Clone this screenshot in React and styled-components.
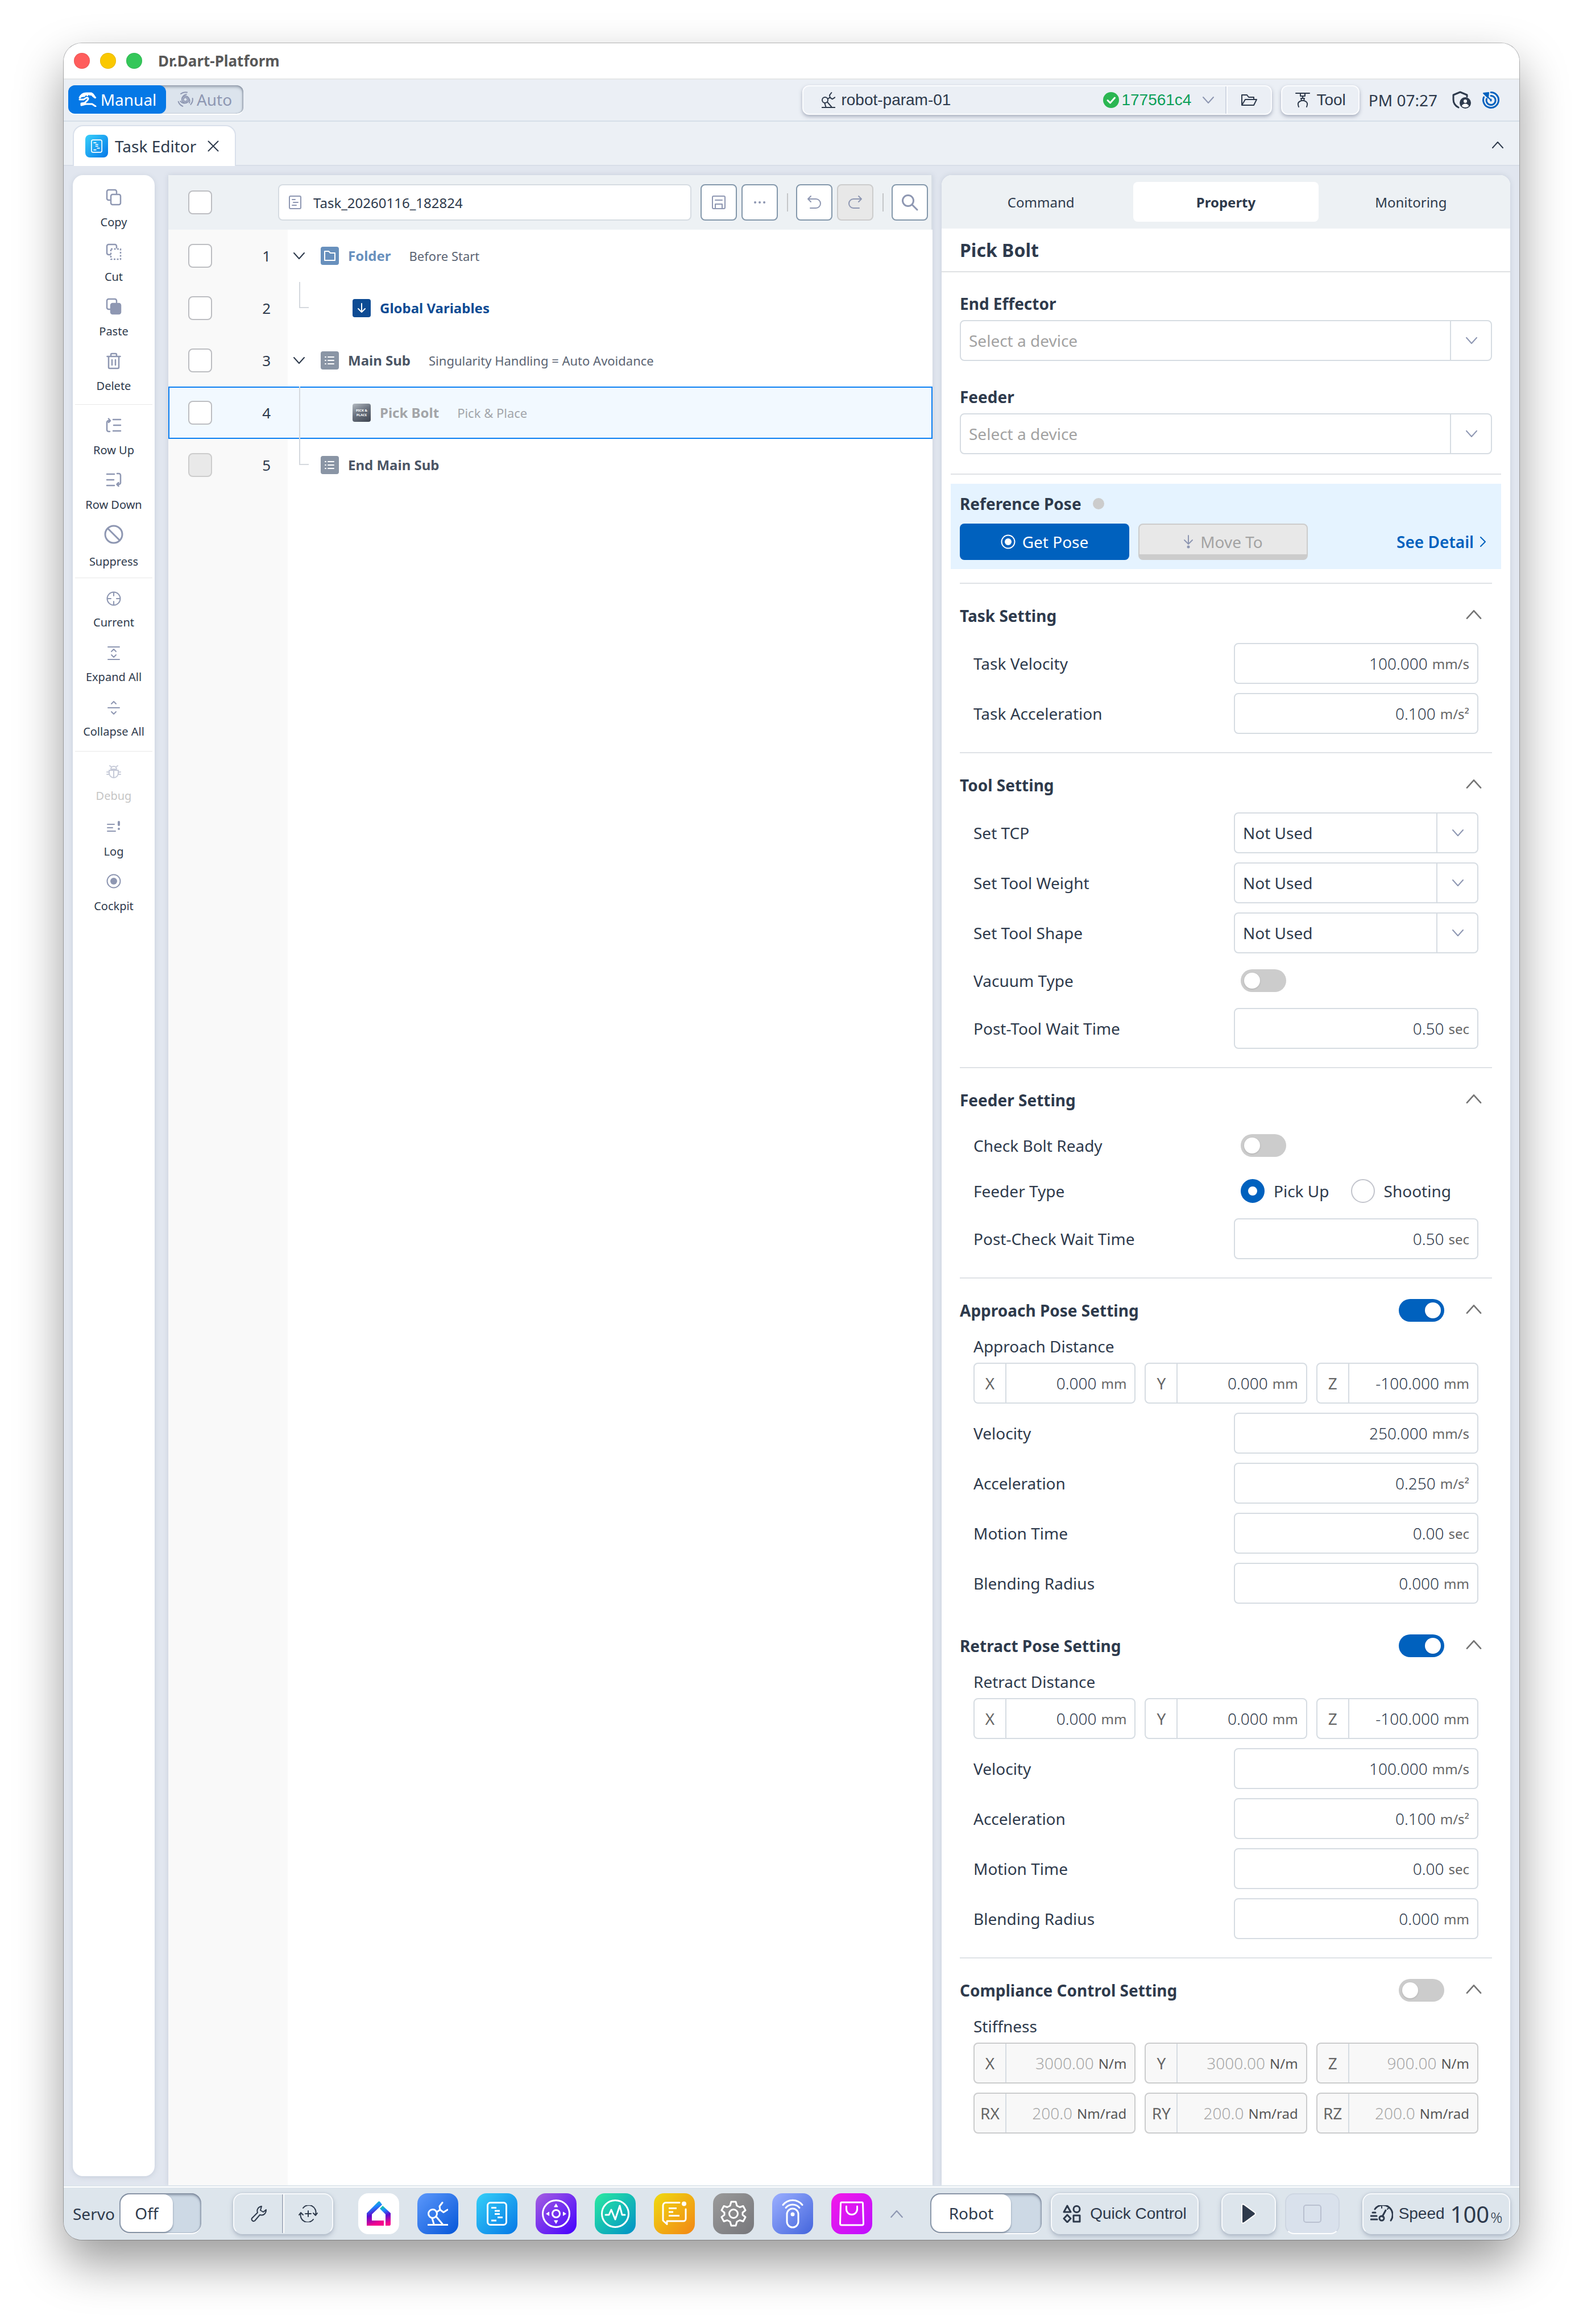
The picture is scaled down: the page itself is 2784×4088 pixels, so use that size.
import React, { useState } from "react";
import styled, { createGlobalStyle, css } from "styled-components";

const c = {
  ink: "#2e3a4c",
  mute: "#8e97b2",
  line: "#d6dce2",
  rule: "#dfe2e6",
  blue: "#0061be",
  disabled: "#cccccc",
};

const Global = createGlobalStyle`
  *, *::before, *::after { box-sizing: border-box; }
  body { margin: 0; background: #fff; color: ${c.ink}; font-family: "Noto Sans", sans-serif; font-size: 28px; }
  button, input, select { font: inherit; color: inherit; margin: 0; }
  button { cursor: pointer; padding: 0; border: 0; background: none; }
  h1, h2, h3, ul, p { margin: 0; padding: 0; list-style: none; font-size: inherit; }
`;

/* ---------- icons ---------- */

const Svg = styled.svg`
  display: block;
  flex: none;
  fill: none;
  stroke: currentColor;
  stroke-width: ${(p) => p.$sw || 2};
  stroke-linecap: round;
  stroke-linejoin: round;
`;

const Icon = ({ w = 28, h = w, box, sw, children }) => (
  <Svg width={w} height={h} viewBox={box || `0 0 ${w} ${h}`} $sw={sw} aria-hidden="true">
    {children}
  </Svg>
);

const Chevron = ({ dir = "down", w = 20, h = 12, sw = 2 }) => (
  <Icon w={w} h={h} box="0 0 20 12" sw={sw}>
    <path d={dir === "down" ? "M1 1L10 11L19 1" : "M1 11L10 1L19 11"} />
  </Icon>
);

const ChevronRight = () => (
  <Icon w={12} h={18}><path d="M2 1L10 9L2 17" /></Icon>
);

const RobotArm = ({ w = 36, h = 42, sw = 3 }) => (
  <Icon w={w} h={h} box="0 0 36 42" sw={sw}>
    <circle cx="9" cy="21" r="7.5" />
    <path d="M8 29L11 39M15 26L26 39M1 40.5H35M16 18L22 14L21 8L26 1.5M22 14L28 18.5L35 14" />
  </Icon>
);

const TaskGlyph = ({ w = 36, h = 42, sw = 3 }) => (
  <Icon w={w} h={h} box="0 0 36 42" sw={sw}>
    <rect x="1.5" y="1.5" width="33" height="39" rx="5" />
    <path strokeLinecap="butt" d="M8 10.5H17M14 16H23M14 21.5H23M19 27.5H28M8 33H17" />
  </Icon>
);

const HandGlyph = () => (
  <Icon w={34} h={26}>
    <path d="M2 10C4 4 9 1 15 1H24L27 3L32 10L30 11L26 8L23 5L21 6L19 4L17 7L14 5L12 8H10C7 8 5 9 4 11Z" fill="currentColor" strokeWidth="1" />
    <path d="M3 13H10L15 10C18 9 19 12 17 14L12 19L6 20V23L14 21H25L31 25" strokeWidth="3" />
  </Icon>
);

const AutoGlyph = () => (
  <Icon w={28} h={28}>
    <circle cx="14" cy="14" r="3.500" />
    {[0, 120, 240].map((turn) => (
      <path key={turn} d="M8 14A6 6 0 0 1 18 9.500A9 9 0 0 1 21 20M6 4A13 13 0 0 1 17 1.500" transform={`rotate(${turn} 14 14)`} />
    ))}
  </Icon>
);

const CheckBadge = () => (
  <Icon w={28} h={28} sw={3}>
    <circle cx="14" cy="14" r="14" fill="#2bb652" stroke="none" />
    <path d="M8 14.5L12.5 19L20.5 10" stroke="#fff" />
  </Icon>
);

const FolderOpen = () => (
  <Icon w={30} h={24}>
    <path d="M2 21V3H11L14 7H23V11M2 21L8 11H28L23 21H2Z" />
  </Icon>
);

const ToolGlyph = () => (
  <Icon w={28} h={28}>
    <path d="M2 2H26M10 2V7H18V2M14 7V11M11 11H17L16 15H12ZM12 15C5 17 5 21 7 26M16 15C23 17 23 21 21 26" />
  </Icon>
);

const ShieldUser = () => (
  <Icon w={34} h={32}>
    <path d="M11 29C5 26 2 22 2 15V7L14 2L26 7V10" strokeWidth="3" />
    <circle cx="23" cy="21" r="9" fill="currentColor" />
    <circle cx="23" cy="18" r="3" fill="#fff" stroke="none" />
    <path d="M17 27C17 21 29 21 29 27Q23 31 17 27Z" fill="#fff" stroke="none" />
  </Icon>
);

const TargetGlyph = () => (
  <Icon w={32} h={32} sw={3}>
    <path d="M16 2.500A13.500 13.500 0 1 1 3.500 11M16 8.500A8 8 0 1 1 8.500 14M16 15V17" />
    <path d="M3 4L12 3L11 12ZM10 10L16 16" fill="currentColor" strokeWidth="2" />
  </Icon>
);

const Copy = ({ variant }) => (
  <Icon w={28} h={30}>
    <path d="M8 20H5A3 3 0 0 1 2 17V5A3 3 0 0 1 5 2H16A3 3 0 0 1 19 5V8" strokeWidth="2.5" />
    <rect
      x="9" y="10" width="17" height="18" rx={variant === "dash" ? 0 : 3} strokeWidth="2.5"
      strokeDasharray={variant === "dash" ? "3 2.500" : undefined}
      strokeLinecap="butt"
      fill={variant === "fill" ? "currentColor" : "none"}
    />
  </Icon>
);

const SideIcons = {
  copy: <Copy />,
  cut: <Copy variant="dash" />,
  paste: <Copy variant="fill" />,
  trash: (
    <Icon w={26} h={30} sw={2.5}>
      <path d="M1.500 7H24.500M8 7V4A2 2 0 0 1 10 2H16A2 2 0 0 1 18 4V7M4 7V26A2 2 0 0 0 6 28H20A2 2 0 0 0 22 26V7M10 13V22M16 13V22" />
    </Icon>
  ),
  rowUp: (
    <Icon w={28} h={26} sw={2.5}>
      <path d="M7 24H5A3 3 0 0 1 2 21V8A3 3 0 0 1 5 5H7M5 1.500L8 5L5 8M13 3H26M14 13H26M13 23H26" />
    </Icon>
  ),
  rowDown: (
    <Icon w={28} h={26} sw={2.5}>
      <path d="M2 3H15M2 13H14M2 23H15M20 2H23A3 3 0 0 1 26 5V18A3 3 0 0 1 23 21H20M22.500 18L19.500 21L22.500 24" />
    </Icon>
  ),
  suppress: (
    <Icon w={34} h={34} sw={3}><circle cx="17" cy="17" r="15" /><path d="M6.500 6.500L27.500 27.500" /></Icon>
  ),
  current: (
    <Icon w={26} h={26}><circle cx="13" cy="13" r="11.500" /><path d="M13 2V8M13 18V24M2 13H8M18 13H24" /></Icon>
  ),
  expand: (
    <Icon w={24} h={26}><path d="M2 2H22M2 24H22M8 10L12 6L16 10M8 16L12 20L16 16" /></Icon>
  ),
  collapse: (
    <Icon w={24} h={26}><path d="M2 13H22M8 6L12 2L16 6M8 20L12 24L16 20" /></Icon>
  ),
  debug: (
    <Icon w={26} h={26}>
      <path d="M8 8A5 5 0 0 1 18 8ZM6 2L9 4M20 2L17 4M5 10H21V15A8 8 0 0 1 5 15ZM13 10V23M1 13H5M1 17H5M21 13H25M21 17H25" />
    </Icon>
  ),
  log: (
    <Icon w={24} h={24}>
      <path d="M1 8H13M1 14H10M1 20H15" />
      <path d="M21 4V9" strokeWidth="4" /><circle cx="21" cy="16" r="2" fill="currentColor" stroke="none" />
    </Icon>
  ),
  cockpit: (
    <Icon w={26} h={26}><circle cx="13" cy="13" r="11.500" /><circle cx="13" cy="13" r="6" fill="currentColor" stroke="none" /></Icon>
  ),
};

/* ---------- window frame ---------- */

const Page = styled.div`
  display: flex;
  min-height: 100vh;
  padding: 76px 112px 148px;
`;

const Window = styled.main`
  display: flex;
  flex-direction: column;
  flex: 1;
  min-width: 0;
  overflow: hidden;
  border-radius: 32px;
  background: #e1e6ef;
  box-shadow: 0 0 0 1px rgba(0, 0, 0, 0.26), 0 40px 84px rgba(0, 0, 0, 0.4);
`;

const TitleBar = styled.header`
  display: flex;
  align-items: center;
  gap: 18px;
  height: 64px;
  padding-left: 18px;
  background: #fff;
  border-bottom: 2px solid #e5e6e7;
`;

const Light = styled.button`
  width: 28px;
  height: 28px;
  border-radius: 50%;
  background: ${(p) => p.$color};
  box-shadow: inset 0 0 0 1px rgba(0, 0, 0, 0.08);
`;

const AppName = styled.h1`
  margin-left: 10px;
  color: #585858;
  font-size: 26px;
  line-height: 36px;
  font-weight: 700;
`;

const HeaderBar = styled.div`
  display: flex;
  align-items: center;
  gap: 16px;
  height: 74px;
  padding: 0 34px 0 8px;
  background: #ebeff5;
  border-bottom: 2px solid #d5dee8;
`;

const ModeSwitch = styled.div`
  display: flex;
  height: 52px;
  width: 308px;
  border-radius: 12px;
  background: #dce4ed;
  border-bottom: 2px solid #fff;
  box-shadow: inset 0 3px 5px rgba(90, 100, 120, 0.55), inset -2px 0 2px rgba(90, 100, 120, 0.3);
`;

const ModeButton = styled.button`
  display: flex;
  align-items: center;
  justify-content: center;
  gap: 6px;
  height: 50px;
  width: ${(p) => (p.$on ? 172 : 136)}px;
  border-radius: 12px;
  color: ${(p) => (p.$on ? "#fff" : c.mute)};
  background: ${(p) => (p.$on ? "#0578e6" : "transparent")};
`;

const raised = css`
  border: 2px solid #fbfcfe;
  box-shadow: 0 3px 6px rgba(100, 110, 135, 0.5);
  background: #ebeff5;
`;

const ParamBar = styled.div`
  ${raised}
  display: flex;
  align-items: center;
  width: 826px;
  height: 52px;
  margin-left: auto;
  border-radius: 12px;
  font-family: "Liberation Sans", Arial, sans-serif;
`;

const ParamName = styled.button`
  display: flex;
  align-items: center;
  gap: 10px;
  flex: 1;
  padding-left: 32px;
`;

const Version = styled.button`
  display: flex;
  align-items: center;
  gap: 4px;
  padding-right: 22px;
  color: #0c9f58;

  svg:last-child { margin-left: 16px; color: ${c.mute}; }
`;

const OpenButton = styled.button`
  display: grid;
  place-items: center;
  width: 78px;
  height: 48px;
  border-left: 2px solid #fbfcfe;
  box-shadow: -2px 0 0 #cfd6e2;
`;

const ToolButton = styled.button`
  ${raised}
  display: flex;
  align-items: center;
  gap: 10px;
  height: 52px;
  padding: 0 22px;
  border-radius: 12px;
  font-family: "Liberation Sans", Arial, sans-serif;
`;

const StatusIcons = styled.div`
  display: flex;
  align-items: center;
  gap: 18px;
  margin-left: 10px;
`;

const IconButton = styled.button`
  display: grid;
  place-items: center;
  color: ${(p) => p.$color || c.ink};
`;

const TabBar = styled.nav`
  display: flex;
  align-items: flex-end;
  justify-content: space-between;
  height: 78px;
  padding: 0 28px 0 16px;
  background: #ecf0f5;
  box-shadow: inset 0 -2px 0 #d8dee8;
`;

const EditorTab = styled.div`
  display: flex;
  align-items: center;
  gap: 12px;
  height: 72px;
  padding: 0 28px 0 20px;
  background: #fff;
  border: 2px solid #d9e0eb;
  border-bottom: 0;
  border-radius: 18px 18px 0 0;
`;

const TabIcon = styled.span`
  display: grid;
  place-items: center;
  width: 40px;
  height: 40px;
  border-radius: 8px;
  color: #fff;
  background: linear-gradient(135deg, #38d0fa, #0577e8);
`;

const CloseButton = styled(IconButton)`
  margin-left: 8px;
`;

const CollapseButton = styled(IconButton)`
  height: 74px;
`;

/* ---------- body ---------- */

const Body = styled.div`
  display: flex;
  flex: 1;
  padding: 16px 16px 0;
`;

const SideBar = styled.nav`
  width: 144px;
  margin: 0 24px 16px 0;
  padding: 21px 4px;
  background: #fff;
  border-radius: 18px;
  box-shadow: 0 2px 8px rgba(120, 135, 160, 0.25);
`;

const SideGroup = styled.div`
  display: flex;
  flex-direction: column;
  gap: 20px;

  & + & { margin-top: 18px; padding-top: 18px; border-top: 1px solid #e8e8e8; }
`;

const SideButton = styled.button`
  display: flex;
  flex-direction: column;
  align-items: center;
  gap: ${(p) => p.$gap || 12}px;
  height: 76px;
  opacity: ${(p) => (p.disabled ? 0.5 : 1)};
`;

const SideIcon = styled.span`
  display: grid;
  place-items: center;
  flex: none;
  height: 36px;
  color: ${c.mute};
`;

const SideLabel = styled.span`
  font-size: 20px;
  line-height: 28px;
  white-space: nowrap;
  color: ${(p) => (p.$off ? "#8c8c8c" : c.ink)};
`;

const Editor = styled.section`
  display: flex;
  flex-direction: column;
  flex: 1;
  min-width: 0;
  background: linear-gradient(to right, #f9f9f9 210px, #fff 210px);
  box-shadow: 0 0 8px rgba(120, 135, 160, 0.25);
`;

const EditorHead = styled.div`
  display: flex;
  align-items: center;
  height: 96px;
  padding: 0 6px 0 35px;
  background: #edf1f4;
  border-right: 2px solid #d8dee6;
`;

const Check = styled.input.attrs({ type: "checkbox" })`
  appearance: none;
  flex: none;
  width: 42px;
  height: 42px;
  border: 2px solid #bdbec2;
  border-radius: 8px;
  background: #fff;

  &:disabled { background: #e9e9e9; border-color: #ccc; }
`;

const TaskName = styled.label`
  display: flex;
  align-items: center;
  gap: 20px;
  flex: 1;
  height: 64px;
  margin: 0 16px 0 116px;
  padding-left: 16px;
  border: 2px solid ${c.line};
  border-radius: 8px;
  background: #fff;
  color: ${c.mute};

  input {
    flex: 1;
    min-width: 0;
    border: 0;
    outline: 0;
    padding: 0;
    background: none;
    color: ${c.ink};
    font-size: 24px;
  }
`;

const HeadTools = styled.div`
  display: flex;
  gap: 8px;

  & + & { margin-left: 16px; padding-left: 16px; position: relative; }
  & + &::before {
    content: "";
    position: absolute;
    left: 0;
    top: 16px;
    height: 32px;
    border-left: 2px solid #c4c6c8;
  }
`;

const SquareButton = styled.button`
  display: grid;
  place-items: center;
  width: 64px;
  height: 64px;
  border: 2px solid #8498ab;
  border-radius: 8px;
  background: #fff;
  color: ${c.mute};

  &:disabled { background: #e8e8e8; border-color: #ccc; }
`;

const TaskRow = styled.li`
  display: flex;
  height: 92px;
  ${(p) => p.$selected && css`background: #f2f9ff; box-shadow: inset 0 0 0 2px #0b7ff2;`}
`;

const RowGutter = styled.div`
  display: flex;
  align-items: center;
  justify-content: space-between;
  width: 210px;
  padding: 0 30px 0 35px;
  font-size: 26px;
`;

const TreeSlot = styled.div`
  width: ${(p) => (p.$deep ? 114 : 58)}px;
  padding-left: ${(p) => (p.$fold ? 10 : 20)}px;
  display: flex;
  align-items: ${(p) => (p.$fold ? "center" : "flex-start")};
`;

const Guide = styled.span`
  width: 17px;
  height: ${(p) => (p.$through ? 92 : 46)}px;
  border-left: 2px solid #d5d9de;
  border-bottom: ${(p) => (p.$through ? 0 : 2)}px solid #d5d9de;
`;

const RowBody = styled.div`
  display: flex;
  align-items: center;
  gap: 16px;
`;

const RowIcon = styled.span`
  display: grid;
  place-items: center;
  width: 32px;
  height: 32px;
  border-radius: 4px;
  color: #fff;
  background: ${(p) => p.$bg};
  font-size: 6px;
  line-height: 8px;
  font-weight: 700;
  text-align: center;
`;

const RowName = styled.strong`
  font-size: 24px;
  line-height: 32px;
  color: ${(p) => p.$color};
`;

const RowMeta = styled.span`
  margin-left: 16px;
  font-size: 22px;
  line-height: 30px;
  color: ${(p) => (p.$dim ? "#a3a6ab" : "#5b6473")};
`;

/* ---------- property panel ---------- */

const Panel = styled.aside`
  width: 1000px;
  margin-left: 16px;
  background: #fff;
  border-radius: 18px 18px 0 0;
  box-shadow: 0 0 8px rgba(120, 135, 160, 0.25);
  overflow: hidden;
`;

const PanelTabs = styled.div`
  display: grid;
  grid-template-columns: repeat(3, 1fr);
  height: 94px;
  padding: 12px;
  background: #edf1f4;
`;

const PanelTab = styled.button`
  height: 70px;
  border-radius: 8px;
  font-size: 24px;
  font-weight: ${(p) => (p.$on ? 700 : 400)};
  background: ${(p) => (p.$on ? "#fff" : "none")};
`;

const PanelTitle = styled.h2`
  height: 77px;
  padding: 0 32px;
  border-bottom: 2px solid #dfe1e3;
  font-size: 32px;
  line-height: 76px;
  font-weight: 700;
`;

const PanelBody = styled.div`
  padding: 36px 32px 58px;
`;

const Field = styled.div`
  & + & { margin-top: 44px; }
`;

const FieldLabel = styled.label`
  display: block;
  margin-bottom: 10px;
  line-height: 38px;
  font-weight: 700;
`;

const SelectShell = styled.div`
  display: grid;
  width: ${(p) => (p.$narrow ? "430px" : "100%")};
`;

const NativeSelect = styled.select`
  grid-area: 1 / 1;
  appearance: none;
  width: 100%;
  height: 72px;
  padding: 0 90px 0 14px;
  border: 2px solid ${c.line};
  border-radius: 8px;
  background: #fff;
  color: ${(p) => (p.$placeholder ? "#a2a2a2" : c.ink)};
`;

const SelectArrow = styled.span`
  grid-area: 1 / 1;
  justify-self: end;
  display: grid;
  place-items: center;
  width: 74px;
  border-left: 2px solid ${c.line};
  pointer-events: none;
  color: ${c.mute};
`;

const PoseCard = styled.section`
  margin: 34px -16px 24px;
  border-top: 2px solid ${c.rule};
  padding-top: 16px;
`;

const PoseInner = styled.div`
  padding: 16px;
  background: #e5f3ff;
`;

const PoseTitle = styled.h3`
  display: flex;
  align-items: center;
  gap: 20px;
  margin-bottom: 16px;
  line-height: 38px;
  font-weight: 700;
`;

const Dot = styled.span`
  width: 20px;
  height: 20px;
  border-radius: 50%;
  background: #ccc;
`;

const PoseActions = styled.div`
  display: flex;
  align-items: center;
  gap: 16px;
`;

const PoseButton = styled.button`
  display: flex;
  align-items: center;
  justify-content: center;
  gap: 12px;
  width: 298px;
  height: 64px;
  border-radius: 8px;
  color: #fff;
  background: ${c.blue};

  &:disabled {
    padding-top: 8px;
    color: #a3a3a3;
    background: #e8e8e8;
    border: 2px solid #ccc;
    border-bottom-width: 10px;
  }
  &:disabled svg { color: ${c.mute}; }
`;

const DetailLink = styled.a`
  display: flex;
  align-items: center;
  gap: 10px;
  margin-left: auto;
  padding-right: 10px;
  color: ${c.blue};
  font-weight: 600;
  text-decoration: none;
`;

const SectionBox = styled.section`
  border-top: ${(p) => (p.$plain ? 0 : 2)}px solid ${c.rule};
  padding: ${(p) => (p.$plain ? 18 : 32)}px 0 32px;
`;

const SectionHead = styled.div`
  display: flex;
  align-items: center;
  height: 48px;
  margin-bottom: 24px;
  padding-right: 18px;

  h3 { flex: 1; font-weight: 700; line-height: 38px; }
`;

const SectionToggle = styled.button`
  margin-left: 38px;
  padding-bottom: 4px;
  color: #757575;
`;

const Rows = styled.div`
  display: flex;
  flex-direction: column;
  gap: 16px;
  padding: 0 24px;
`;

const Row = styled.div`
  display: flex;
  align-items: center;
  justify-content: space-between;
  min-height: 64px;
`;

const ControlCell = styled.div`
  display: flex;
  align-items: center;
  width: 430px;
  padding-left: 12px;
`;

const Switch = styled.input.attrs({ type: "checkbox", role: "switch" })`
  appearance: none;
  display: flex;
  align-items: center;
  flex: none;
  width: 80px;
  height: 40px;
  padding: 0 6px;
  border-radius: 20px;
  background: ${c.disabled};

  &::before {
    content: "";
    width: 28px;
    height: 28px;
    border-radius: 50%;
    background: #fff;
    box-shadow: 0 1px 3px rgba(0, 0, 0, 0.15);
  }
  &:checked { background: ${c.blue}; justify-content: flex-end; }
`;

const RadioLabel = styled.label`
  display: flex;
  align-items: center;
  gap: 16px;

  & + & { margin-left: 38px; }
`;

const Radio = styled.input.attrs({ type: "radio" })`
  appearance: none;
  flex: none;
  width: 42px;
  height: 42px;
  border: 2px solid #c2c4cc;
  border-radius: 50%;
  background: #fff;

  &:checked { border: 13px solid ${c.blue}; }
`;

const NumberBox = styled.div`
  display: flex;
  align-items: center;
  flex: ${(p) => (p.$axis ? "1" : "none")};
  min-width: 0;
  width: ${(p) => (p.$axis ? "auto" : "430px")};
  height: 72px;
  padding-right: 14px;
  border: 2px solid ${(p) => (p.$off ? "#cbcccd" : c.line)};
  border-radius: 8px;
  background: ${(p) => (p.$off ? "#f8f8f8" : "#fff")};

  input {
    flex: 1;
    min-width: 0;
    width: 0;
    border: 0;
    outline: 0;
    padding: 0;
    background: none;
    text-align: right;
    font-weight: 300;
    color: ${(p) => (p.$off ? "#a8a8a8" : c.ink)};
  }
`;

const AxisName = styled.label`
  display: grid;
  place-items: center;
  width: 56px;
  height: 68px;
  border-right: 2px solid ${c.line};
  font-size: 28px;
  color: #666;
`;

const Unit = styled.span`
  margin-left: 8px;
  font-size: 24px;
  color: ${(p) => (p.$off ? "#565656" : "#666")};
`;

const AxisGroup = styled.fieldset`
  display: flex;
  flex-wrap: wrap;
  gap: 16px;
  min-width: 0;
  margin: 0;
  padding: 0;
  border: 0;

  legend { padding: 0; margin-bottom: 14px; line-height: 30px; }
`;

const AxisRow = styled.div`
  display: flex;
  flex: 1 0 100%;
  gap: 16px;
`;

/* ---------- dock ---------- */

const Dock = styled.footer`
  display: flex;
  align-items: center;
  height: 96px;
  padding: 4px 16px 0;
  background: #dde5ec;
  box-shadow: inset 0 2px 0 #dde5ec, inset 0 4px 0 #fff;
`;

const ServoLabel = styled.span`
  margin-right: 8px;
`;

const DockSwitch = styled.button`
  display: flex;
  width: ${(p) => p.$w}px;
  height: 72px;
  padding: 2px;
  border-radius: 18px;
  background: #cdd9e5;
  border-bottom: 2px solid #fff;
  box-shadow: inset 0 3px 4px rgba(80, 92, 115, 0.6), inset -2px 0 2px rgba(80, 92, 115, 0.3), inset 2px 0 2px rgba(80, 92, 115, 0.3);

  span {
    display: grid;
    place-items: center;
    width: ${(p) => p.$knob}px;
    height: 66px;
    border-radius: 16px;
    background: #fff;
    box-shadow: 0 2px 3px rgba(70, 85, 110, 0.6);
  }
`;

const raisedDock = css`
  border: 2px solid #f8fafc;
  border-bottom-color: #dde5ec;
  box-shadow: 0 4px 8px rgba(100, 115, 140, 0.35), 0 0 4px rgba(100, 115, 140, 0.2);
  background: #dde5ec;
`;

const DockPair = styled.div`
  ${raisedDock}
  display: grid;
  grid-template-columns: 1fr 1fr;
  width: 176px;
  height: 72px;
  margin-left: 56px;
  border-radius: 16px;

  button + button { border-left: 2px solid #fff; box-shadow: -2px 0 0 #aab3c2; }
`;

const Apps = styled.div`
  display: flex;
  gap: 32px;
  margin-left: 44px;
`;

const AppButton = styled.button`
  display: grid;
  place-items: center;
  width: 72px;
  height: 72px;
  border-radius: 18px;
  color: #fff;
  background: ${(p) => p.$bg};
`;

const MoreApps = styled(IconButton)`
  margin: 0 auto 0 32px;
`;

const DockRight = styled.div`
  display: flex;
  align-items: center;
  gap: 16px;
  font-family: "Liberation Sans", Arial, sans-serif;

  ${DockSwitch} { font-family: "Noto Sans", sans-serif; }
`;

const DockButton = styled.button`
  ${raisedDock}
  display: flex;
  align-items: center;
  justify-content: center;
  gap: ${(p) => p.$gap || 16}px;
  width: ${(p) => p.$w || 96}px;
  height: 72px;
  border-radius: 16px;
  margin-right: ${(p) => p.$after || 0}px;

  &:disabled {
    background: #d9e1ec;
    border-color: #ced6e2;
    border-bottom-color: #fff;
    box-shadow: none;
    color: #b9c0d0;
  }
`;

const Speed = styled.span`
  display: flex;
  align-items: baseline;
  gap: 2px;
  font-family: "Noto Sans", sans-serif;
  font-size: 40px;

  small { font-size: 26px; font-weight: 300; }
`;

/* ---------- composed parts ---------- */

const slug = (s) => s.toLowerCase().replace(/[^a-z0-9]+/g, "-");

function Select({ id, value, narrow, placeholder }) {
  return (
    <SelectShell $narrow={narrow}>
      <NativeSelect id={id} defaultValue={value} $placeholder={placeholder}>
        <option>{value}</option>
      </NativeSelect>
      <SelectArrow><Chevron w={20} h={12} /></SelectArrow>
    </SelectShell>
  );
}

function NumberRow({ group, label, value, unit }) {
  const id = slug(`${group} ${label}`);
  return (
    <Row>
      <label htmlFor={id}>{label}</label>
      <NumberBox>
        <input id={id} defaultValue={value} inputMode="decimal" />
        <Unit>{unit}</Unit>
      </NumberBox>
    </Row>
  );
}

function SelectRow({ label }) {
  const id = slug(label);
  return (
    <Row>
      <label htmlFor={id}>{label}</label>
      <Select id={id} value="Not Used" narrow />
    </Row>
  );
}

function SwitchRow({ label }) {
  const id = slug(label);
  return (
    <Row>
      <label htmlFor={id}>{label}</label>
      <ControlCell><Switch id={id} /></ControlCell>
    </Row>
  );
}

function Axes({ legend, rows, off }) {
  return (
    <AxisGroup disabled={off}>
      <legend>{legend}</legend>
      {rows.map((row, i) => (
        <AxisRow key={i}>
          {row.map(([axis, value, unit]) => {
            const id = slug(`${legend} ${axis}`);
            return (
              <NumberBox key={axis} $axis $off={off}>
                <AxisName htmlFor={id}>{axis}</AxisName>
                <input id={id} defaultValue={value} />
                <Unit $off={off}>{unit}</Unit>
              </NumberBox>
            );
          })}
        </AxisRow>
      ))}
    </AxisGroup>
  );
}

function Section({ title, plain, toggle, children }) {
  const [open, setOpen] = useState(true);
  return (
    <SectionBox $plain={plain}>
      <SectionHead>
        <h3>{title}</h3>
        {toggle !== undefined && <Switch defaultChecked={toggle} aria-label={title} />}
        <SectionToggle aria-label={`Fold ${title}`} onClick={() => setOpen(!open)}>
          <Chevron dir={open ? "up" : "down"} w={28} h={16} sw={2} />
        </SectionToggle>
      </SectionHead>
      {open && <Rows>{children}</Rows>}
    </SectionBox>
  );
}

const sideGroups = [
  [["copy", "Copy"], ["cut", "Cut"], ["paste", "Paste"], ["trash", "Delete"]],
  [["rowUp", "Row Up"], ["rowDown", "Row Down"], ["suppress", "Suppress", 16]],
  [["current", "Current", 10], ["expand", "Expand All", 10], ["collapse", "Collapse All", 10]],
  [["debug", "Debug", 10, true], ["log", "Log"], ["cockpit", "Cockpit"]],
];

const listGlyph = (
  <Icon w={20} h={20}>
    <path d="M2 4H3M2 10H3M2 16H3M7 4H17M7 10H17M7 16H17" />
  </Icon>
);

const tasks = [
  { name: "Folder", meta: "Before Start", color: "#6890bd", bg: "#6890bd", fold: true,
    icon: <Icon w={20} h={20}><path d="M1 2H8L11 5H19V18H1Z" /></Icon> },
  { name: "Global Variables", color: "#0d4b94", bg: "#0d4b94", deep: true,
    icon: <Icon w={20} h={20}><path d="M10 2V17M4 11L10 17L16 11" /></Icon> },
  { name: "Main Sub", meta: "Singularity Handling = Auto Avoidance", color: "#4b5565", bg: "#8a95a5", fold: true, icon: listGlyph },
  { name: "Pick Bolt", meta: "Pick & Place", color: "#a3a5a8", deep: true, through: true, selected: true, dim: true,
    bg: "linear-gradient(150deg, #b5bcc2, #6c7480 45%, #3d4450)", icon: <span>PICK &amp;<br />PLACE</span> },
  { name: "End Main Sub", color: "#4b5565", bg: "#8a95a5", icon: listGlyph, locked: true },
];

const g = (a, b) => `linear-gradient(135deg, ${a}, ${b})`;

const apps = [
  ["Home", "#fff", (
    <Icon w={44} h={44}>
      <defs>
        <linearGradient id="homeFill" x1="0" y1="0" x2="0.25" y2="1">
          <stop offset="0" stopColor="#1be07f" /><stop offset="0.3" stopColor="#1a8cff" />
          <stop offset="0.6" stopColor="#5a0ad0" /><stop offset="1" stopColor="#f5008c" />
        </linearGradient>
      </defs>
      <path d="M1 43V21L21 1C22 0 24 0 25 2L28 6L10 23V34H31V43Z" fill="url(#homeFill)" stroke="none" />
      <path d="M29 8L43 21V40Q43 43 41 43H34V23L24 13Z" fill="url(#homeFill)" stroke="none" />
    </Icon>
  )],
  ["Robot", g("#5c98fb", "#0556d8"), <RobotArm />],
  ["Task Editor", g("#35d0f8", "#0577e6"), <TaskGlyph />],
  ["Jog", g("#a55fe0", "#4400ff"), (
    <Icon w={52} h={52} sw={3}>
      <circle cx="26" cy="26" r="23.500" /><circle cx="26" cy="26" r="6.500" />
      <path d="M26 9L29 14H23ZM26 43L29 38H23ZM9 26L13.500 23V29ZM43 26L38.500 23V29Z" fill="currentColor" strokeWidth="1" />
    </Icon>
  )],
  ["Monitor", g("#2beaa0", "#0090c8"), (
    <Icon w={52} h={52} sw={3}>
      <circle cx="26" cy="26" r="23.500" />
      <path d="M9 28H15L19 19L26 36L34 12L38 28H43" />
    </Icon>
  )],
  ["Log", g("#efda10", "#f28616"), (
    <Icon w={44} h={44} sw={3}>
      <path d="M31 2.500H7A5 5 0 0 0 2 7.500V34L9 40.500V35H38A4 4 0 0 0 42 31V14" />
      <circle cx="39" cy="4.500" r="4" fill="currentColor" stroke="none" />
      <path d="M12 12.500H26M12 19H20M12 25.500H31" strokeLinecap="butt" />
    </Icon>
  )],
  ["Settings", g("#9a9a9a", "#77777b"), (
    <Icon w={46} h={46} sw={3}>
      <circle cx="23" cy="23" r="7.500" />
      <path d="M19 2H27L29 9L34 11.500L40 9.500L44 17L39 21V25L44 29L40 36.500L34 34.500L29 37L27 44H19L17 37L12 34.500L6 36.500L2 29L7 25V21L2 17L6 9.500L12 11.500L17 9Z" />
    </Icon>
  )],
  ["Remote", g("#9bafff", "#4465dc"), (
    <Icon w={40} h={52} sw={3}>
      <rect x="10" y="17" width="20" height="33" rx="10" /><circle cx="20" cy="27" r="3.500" fill="currentColor" stroke="none" />
      <path d="M3 10.500C12 -0.500 28 -0.500 37 10.500M8 15.500C14 8 26 8 32 15.500" />
    </Icon>
  )],
  ["Store", g("#f31ae8", "#bd10ff"), (
    <Icon w={44} h={44} sw={3}>
      <path d="M4 2H40Q41.500 2 41.500 4L42.500 39Q42.500 42 40 42H4Q1.500 42 1.500 39L2.500 4Q2.500 2 4 2ZM12.500 9V14A9.500 9.500 0 0 0 31.500 14V9" />
    </Icon>
  )],
];

export default function App() {
  return (
    <Page>
      <Global />
      <Window>
        <TitleBar>
          <Light $color="#ff5d5c" aria-label="Close" />
          <Light $color="#fac800" aria-label="Minimise" />
          <Light $color="#34c759" aria-label="Zoom" />
          <AppName>Dr.Dart-Platform</AppName>
        </TitleBar>

        <HeaderBar>
          <ModeSwitch>
            <ModeButton $on aria-pressed="true"><HandGlyph />Manual</ModeButton>
            <ModeButton aria-pressed="false"><AutoGlyph />Auto</ModeButton>
          </ModeSwitch>
          <ParamBar>
            <ParamName><RobotArm w={24} h={30} />robot-param-01</ParamName>
            <Version><CheckBadge />177561c4<Chevron /></Version>
            <OpenButton aria-label="Open"><FolderOpen /></OpenButton>
          </ParamBar>
          <ToolButton><ToolGlyph />Tool</ToolButton>
          <span>PM 07:27</span>
          <StatusIcons>
            <IconButton aria-label="Safety"><ShieldUser /></IconButton>
            <IconButton aria-label="Recovery" $color={c.blue}><TargetGlyph /></IconButton>
          </StatusIcons>
        </HeaderBar>

        <TabBar>
          <EditorTab>
            <TabIcon><TaskGlyph w={20} h={24} sw={3} /></TabIcon>
            Task Editor
            <CloseButton aria-label="Close tab">
              <Icon w={20} h={20}><path d="M1.500 1.500L18.500 18.500M18.500 1.500L1.500 18.500" /></Icon>
            </CloseButton>
          </EditorTab>
          <CollapseButton aria-label="Collapse header"><Chevron dir="up" /></CollapseButton>
        </TabBar>

        <Body>
          <SideBar>
            {sideGroups.map((group, i) => (
              <SideGroup key={i}>
                {group.map(([icon, label, gap, off]) => (
                  <SideButton key={label} $gap={gap} disabled={off}>
                    <SideIcon>{SideIcons[icon]}</SideIcon>
                    <SideLabel $off={off}>{label}</SideLabel>
                  </SideButton>
                ))}
              </SideGroup>
            ))}
          </SideBar>

          <Editor>
            <EditorHead>
              <Check aria-label="Select all" />
              <TaskName>
                <Icon w={24} h={26}>
                  <rect x="2" y="2" width="20" height="22" rx="2" />
                  <path d="M7 8H12M9 13H17M7 18H14" />
                </Icon>
                <input aria-label="Task name" defaultValue="Task_20260116_182824" />
              </TaskName>
              <HeadTools>
                <SquareButton aria-label="Save">
                  <Icon w={26} h={26}><rect x="2" y="2" width="22" height="22" rx="2" /><path d="M7 9H19M7 24V16H19V24" /></Icon>
                </SquareButton>
                <SquareButton aria-label="More">
                  <Icon w={22} h={6}><path d="M3 3H3.100M11 3H11.100M19 3H19.100" strokeWidth="4" /></Icon>
                </SquareButton>
              </HeadTools>
              <HeadTools>
                <SquareButton aria-label="Undo">
                  <Icon w={26} h={26}><path d="M7 2L2 7L7 12M2 7H16A8 8 0 0 1 16 23H6" /></Icon>
                </SquareButton>
                <SquareButton aria-label="Redo" disabled>
                  <Icon w={26} h={26}><path d="M19 2L24 7L19 12M24 7H10A8 8 0 0 0 10 23H20" /></Icon>
                </SquareButton>
              </HeadTools>
              <HeadTools>
                <SquareButton aria-label="Search">
                  <Icon w={30} h={30} sw={3}><circle cx="12" cy="12" r="9.500" /><path d="M19 19L28 28" /></Icon>
                </SquareButton>
              </HeadTools>
            </EditorHead>
            <ul>
              {tasks.map((t, i) => (
                <TaskRow key={t.name} $selected={t.selected}>
                  <RowGutter>
                    <Check aria-label={`Select ${t.name}`} disabled={t.locked} />
                    {i + 1}
                  </RowGutter>
                  <TreeSlot $deep={t.deep} $fold={t.fold}>
                    {t.fold ? <Chevron w={20} h={12} /> : <Guide $through={t.through} />}
                  </TreeSlot>
                  <RowBody>
                    <RowIcon $bg={t.bg}>{t.icon}</RowIcon>
                    <RowName $color={t.color}>{t.name}</RowName>
                    {t.meta && <RowMeta $dim={t.dim}>{t.meta}</RowMeta>}
                  </RowBody>
                </TaskRow>
              ))}
            </ul>
          </Editor>

          <Panel>
            <PanelTabs>
              <PanelTab>Command</PanelTab>
              <PanelTab $on>Property</PanelTab>
              <PanelTab>Monitoring</PanelTab>
            </PanelTabs>
            <PanelTitle>Pick Bolt</PanelTitle>
            <PanelBody>
              <Field>
                <FieldLabel htmlFor="effector">End Effector</FieldLabel>
                <Select id="effector" value="Select a device" placeholder />
              </Field>
              <Field>
                <FieldLabel htmlFor="feeder">Feeder</FieldLabel>
                <Select id="feeder" value="Select a device" placeholder />
              </Field>
              <PoseCard>
                <PoseInner>
                  <PoseTitle>Reference Pose<Dot /></PoseTitle>
                  <PoseActions>
                    <PoseButton>
                      <Icon w={26} h={26}><circle cx="13" cy="13" r="11.500" /><circle cx="13" cy="13" r="6" fill="currentColor" stroke="none" /></Icon>
                      Get Pose
                    </PoseButton>
                    <PoseButton disabled>
                      <Icon w={18} h={24}><path d="M9 1V15M2 9L9 16L16 9" /><circle cx="9" cy="21" r="2.500" fill="currentColor" stroke="none" /></Icon>
                      Move To
                    </PoseButton>
                    <DetailLink href="#detail">See Detail<ChevronRight /></DetailLink>
                  </PoseActions>
                </PoseInner>
              </PoseCard>

              <Section title="Task Setting">
                <NumberRow group="task" label="Task Velocity" value="100.000" unit="mm/s" />
                <NumberRow group="task" label="Task Acceleration" value="0.100" unit="m/s²" />
              </Section>

              <Section title="Tool Setting">
                <SelectRow label="Set TCP" />
                <SelectRow label="Set Tool Weight" />
                <SelectRow label="Set Tool Shape" />
                <SwitchRow label="Vacuum Type" />
                <NumberRow group="tool" label="Post-Tool Wait Time" value="0.50" unit="sec" />
              </Section>

              <Section title="Feeder Setting">
                <SwitchRow label="Check Bolt Ready" />
                <Row role="radiogroup" aria-label="Feeder Type">
                  <span>Feeder Type</span>
                  <ControlCell>
                    <RadioLabel><Radio name="feederType" defaultChecked />Pick Up</RadioLabel>
                    <RadioLabel><Radio name="feederType" />Shooting</RadioLabel>
                  </ControlCell>
                </Row>
                <NumberRow group="feeder" label="Post-Check Wait Time" value="0.50" unit="sec" />
              </Section>

              <Section title="Approach Pose Setting" toggle={true}>
                <Axes legend="Approach Distance" rows={[[["X", "0.000", "mm"], ["Y", "0.000", "mm"], ["Z", "-100.000", "mm"]]]} />
                <NumberRow group="approach" label="Velocity" value="250.000" unit="mm/s" />
                <NumberRow group="approach" label="Acceleration" value="0.250" unit="m/s²" />
                <NumberRow group="approach" label="Motion Time" value="0.00" unit="sec" />
                <NumberRow group="approach" label="Blending Radius" value="0.000" unit="mm" />
              </Section>

              <Section title="Retract Pose Setting" toggle={true} plain>
                <Axes legend="Retract Distance" rows={[[["X", "0.000", "mm"], ["Y", "0.000", "mm"], ["Z", "-100.000", "mm"]]]} />
                <NumberRow group="retract" label="Velocity" value="100.000" unit="mm/s" />
                <NumberRow group="retract" label="Acceleration" value="0.100" unit="m/s²" />
                <NumberRow group="retract" label="Motion Time" value="0.00" unit="sec" />
                <NumberRow group="retract" label="Blending Radius" value="0.000" unit="mm" />
              </Section>

              <Section title="Compliance Control Setting" toggle={false}>
                <Axes
                  legend="Stiffness"
                  off
                  rows={[
                    [["X", "3000.00", "N/m"], ["Y", "3000.00", "N/m"], ["Z", "900.00", "N/m"]],
                    [["RX", "200.0", "Nm/rad"], ["RY", "200.0", "Nm/rad"], ["RZ", "200.0", "Nm/rad"]],
                  ]}
                />
              </Section>
            </PanelBody>
          </Panel>
        </Body>

        <Dock>
          <ServoLabel id="servo">Servo</ServoLabel>
          <DockSwitch $w={144} $knob={92} role="switch" aria-checked="false" aria-labelledby="servo"><span>Off</span></DockSwitch>
          <DockPair>
            <IconButton aria-label="Tools">
              <Icon w={30} h={30}>
                <path d="M20 2C14 3 11 8 13 13L3 23A3.500 3.500 0 0 0 8 27.500L17 17C23 19 28 15 28 8L23 12L18 9Z" />
              </Icon>
            </IconButton>
            <IconButton aria-label="Reset view">
              <Icon w={36} h={30}>
                <path d="M9 5A12.500 12.500 0 0 1 31 16M27 25A12.500 12.500 0 0 1 5 14M2 17L5 13L9 17M27 14L31 18L34 14M18 10V20M13 15H23" />
              </Icon>
            </IconButton>
          </DockPair>
          <Apps>
            {apps.map(([name, bg, icon]) => (
              <AppButton key={name} $bg={bg} aria-label={name}>{icon}</AppButton>
            ))}
          </Apps>
          <MoreApps aria-label="More apps" $color={c.mute}><Chevron dir="up" w={22} h={13} /></MoreApps>
          <DockRight>
            <DockSwitch $w={196} $knob={140} role="switch" aria-checked="false"><span>Robot</span></DockSwitch>
            <DockButton $w={260} $after={24}>
              <Icon w={32} h={32} sw={3}>
                <path d="M8 2L14 13H2ZM8 18L14 24.500L8 31L2 24.500ZM19 19H30V30H19Z" /><circle cx="24.500" cy="8" r="5.500" />
              </Icon>
              Quick Control
            </DockButton>
            <DockButton aria-label="Run">
              <Icon w={30} h={40}>
                <path d="M3 6Q3 2 7 4L26 18Q28 20 26 22L7 36Q3 38 3 34Z" fill="currentColor" stroke="#fff" />
              </Icon>
            </DockButton>
            <DockButton aria-label="Stop" disabled $after={24}>
              <Icon w={32} h={32}><rect x="1" y="1" width="30" height="30" rx="4" /></Icon>
            </DockButton>
            <DockButton $w={260} $gap={10}>
              <Icon w={40} h={30} sw={3}>
                <path d="M8 7A16 16 0 0 1 36 27M1 19H11M4 13H9M1 25H12M21 20L27 9" />
                <circle cx="20" cy="23" r="4" /><path d="M20 2V5M30 7L32 5" strokeWidth="2" />
              </Icon>
              Speed
              <Speed>100<small>%</small></Speed>
            </DockButton>
          </DockRight>
        </Dock>
      </Window>
    </Page>
  );
}
